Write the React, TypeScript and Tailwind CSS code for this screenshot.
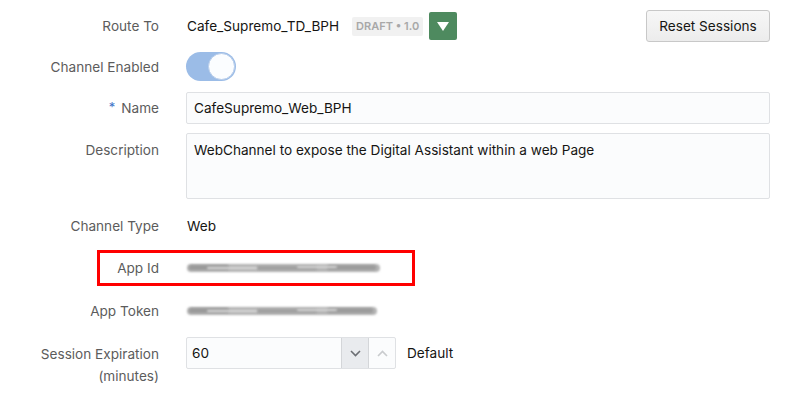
import React from 'react';

const font = { fontFamily: 'Inter, "Noto Sans", "Liberation Sans", sans-serif' };

const Label: React.FC<{ children: React.ReactNode; className?: string }> = ({ children, className = '' }) => (
  <div className={`w-[159px] shrink-0 text-right text-[13.6px] text-[#5c5c5c] ${className}`}>{children}</div>
);

// smudged-out secret value
const Blurred: React.FC<{ width: number }> = ({ width }) => (
  <div className="relative h-[12px]" style={{ width }}>
    <div className="absolute inset-x-0 top-[2px] h-[8px] rounded-full bg-[#b3b3b3] blur-[1.2px]" />
    <div className="absolute left-[2px] w-[40px] top-[3px] h-[5px] rounded-full bg-[#9a9a9a] blur-[1px]" />
    <div className="absolute left-[70px] w-[60px] top-[4px] h-[4px] rounded-full bg-[#a0a0a0] blur-[1px]" />
    <div className="absolute left-[140px] right-[4px] top-[3px] h-[5px] rounded-full bg-[#9c9c9c] blur-[1px]" />
    <div className="absolute left-[20px] w-[50px] top-[5px] h-[2px] rounded-full bg-[#dcdcdc] blur-[0.8px]" />
    <div className="absolute left-[110px] w-[40px] top-[4px] h-[2px] rounded-full bg-[#d8d8d8] blur-[0.8px]" />
  </div>
);

export default function App() {
  return (
    <div className="w-[789px] h-[409px] bg-white text-[#161513] overflow-hidden" style={font}>
      <div className="flex flex-col pt-[10px]">
        {/* Route To */}
        <div className="flex items-center h-[32px]">
          <Label>Route To</Label>
          <div className="ml-[28px] flex items-center flex-1 pr-[19px]">
            <span className="text-[13.6px]">Cafe_Supremo_TD_BPH</span>
            <span className="ml-[13px] px-[4px] h-[19px] flex items-center rounded-[2px] bg-[#f1f1f1] text-[11px] font-semibold text-[#a8a8a8]">
              DRAFT • 1.0
            </span>
            <button className="ml-[6px] w-[28px] h-[28px] rounded-[2px] bg-[#4e8a5f] flex items-center justify-center">
              <svg width="12" height="9" viewBox="0 0 12 9">
                <path d="M0 0 L12 0 L6 9 Z" fill="#ffffff" />
              </svg>
            </button>
            <button className="ml-auto w-[124px] h-[32px] rounded-[3px] border border-[#c8c8c8] bg-gradient-to-b from-[#f7f7f7] to-[#ececec] text-[13.6px] text-[#161513]">
              Reset Sessions
            </button>
          </div>
        </div>

        {/* Channel Enabled */}
        <div className="flex items-center h-[30px] mt-[9px]">
          <Label className="pt-[3px]">Channel Enabled</Label>
          <div className="ml-[27px] w-[50px] h-[29px] rounded-full bg-[#9bbce7] relative">
            <div className="absolute right-[1px] top-[1px] w-[27px] h-[27px] rounded-full bg-[#fbfdff] border border-[#b8cdea]" />
          </div>
        </div>

        {/* Name */}
        <div className="flex items-center h-[32px] mt-[11px]">
          <Label>
            <span className="text-[#3f74c8] text-[13px] align-top mr-[6px]">*</span>Name
          </Label>
          <div className="ml-[27px] flex-1 mr-[19px] h-[32px] border border-[#dfe1e4] rounded-[2px] bg-[#fbfcfd] flex items-center px-[7px] text-[13.6px]">
            CafeSupremo_Web_BPH
          </div>
        </div>

        {/* Description */}
        <div className="flex h-[66px] mt-[9px]">
          <Label className="pt-[7px]">Description</Label>
          <div className="ml-[27px] flex-1 mr-[19px] h-[66px] border border-[#dfe1e4] rounded-[2px] bg-[#fbfcfd] px-[7px] pt-[6px] text-[13.6px]">
            WebChannel to expose the Digital Assistant within a web Page
          </div>
        </div>

        {/* Channel Type */}
        <div className="flex items-center h-[20px] mt-[17px]">
          <Label>Channel Type</Label>
          <div className="ml-[28px] text-[13.6px]">Web</div>
        </div>

        {/* App Id */}
        <div className="relative flex items-center h-[36px] mt-[14px]">
          <Label>App Id</Label>
          <div className="ml-[28px]">
            <Blurred width={193} />
          </div>
          <div className="absolute left-[97px] top-0 w-[318px] h-[36px] border-[3px] border-[#ff0000]" />
        </div>

        {/* App Token */}
        <div className="flex items-center h-[20px] mt-[15px]">
          <Label>App Token</Label>
          <div className="ml-[28px]">
            <Blurred width={190} />
          </div>
        </div>

        {/* Session Expiration */}
        <div className="flex mt-[16px]">
          <Label className="leading-[22px] pt-[6px]">
            Session Expiration
            <br />
            (minutes)
          </Label>
          <div className="ml-[27px] flex items-center h-[32px]">
            <div className="flex h-[32px] w-[210px] border border-[#dfe1e4] rounded-[2px] bg-[#fbfcfd]">
              <div className="flex-1 flex items-center px-[5px] text-[13.6px]">60</div>
              <div className="w-[27px] border-l border-[#d4d6d9] bg-[#e9ebee] flex items-center justify-center">
                <svg width="11" height="7" viewBox="0 0 11 7">
                  <path d="M1 1 L5.5 5.5 L10 1" fill="none" stroke="#6b6e73" strokeWidth="1.6" />
                </svg>
              </div>
              <div className="w-[27px] border-l border-[#d4d6d9] flex items-center justify-center">
                <svg width="11" height="7" viewBox="0 0 11 7">
                  <path d="M1 6 L5.5 1.5 L10 6" fill="none" stroke="#c9cbce" strokeWidth="1.6" />
                </svg>
              </div>
            </div>
            <span className="ml-[11px] text-[13.6px]">Default</span>
          </div>
        </div>
      </div>
    </div>
  );
}
